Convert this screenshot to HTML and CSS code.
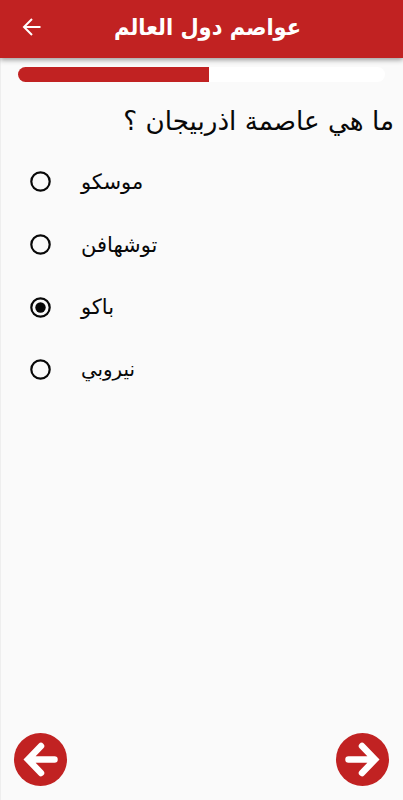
FILE: index.html
```html
<!DOCTYPE html>
<html lang="ar"><head><meta charset="utf-8"><title>عواصم دول العالم</title><link rel="stylesheet" href="styles.css"></head>
<body>
<header class="bar">
<svg class="back" viewBox="0 0 20 20"><path d="M18.5 10H2M10 2 2 10l8 8"/></svg>
<h1 class="title" dir="rtl">عواصم دول العالم</h1>
</header>
<main class="quiz">
<div class="progress"><div class="progress-fill"></div></div>
<h2 class="question" dir="rtl">ما هي عاصمة اذربيجان ؟</h2>
<div class="options">
<div class="option"><svg class="radio" viewBox="0 0 21 21"><circle class="ring" cx="10.5" cy="10.5" r="9.2"/></svg><span class="label">موسكو</span></div>
<div class="option"><svg class="radio" viewBox="0 0 21 21"><circle class="ring" cx="10.5" cy="10.5" r="9.2"/></svg><span class="label">توشهافن</span></div>
<div class="option"><svg class="radio" viewBox="0 0 21 21"><circle class="ring" cx="10.5" cy="10.5" r="9.2"/><circle cx="10.5" cy="10.5" r="5.2"/></svg><span class="label">باكو</span></div>
<div class="option"><svg class="radio" viewBox="0 0 21 21"><circle class="ring" cx="10.5" cy="10.5" r="9.2"/></svg><span class="label narrow">نيروبي</span></div>
</div>
</main>
<footer class="nav">
<button class="round" aria-label="السابق"><svg viewBox="0 0 53 53"><path d="M40.5 26.5H17M27 13 14 26.5 27 40"/></svg></button>
<button class="round" aria-label="التالي"><svg viewBox="0 0 53 53"><path d="M12.5 26.5H36M26 13l13 13.5L26 40"/></svg></button>
</footer>
</body></html>
```
FILE: styles.css
```css
*{box-sizing:border-box}
body{margin:0;height:800px;display:flex;flex-direction:column;background:#fafafa;font-family:"DejaVu Sans",sans-serif;color:#080808;overflow:hidden;box-shadow:inset 1px 0 #eee}
.bar{height:58px;flex:none;background:#c12222;box-shadow:0 2px 5px rgba(0,0,0,.38);display:flex;align-items:center;padding:0 0 5px 22px;color:#fff}
.back{width:20px;height:20px;fill:none;stroke:#fff;stroke-width:2}
.title{margin:0 0 0 72px;font-size:23px;line-height:54px;white-space:nowrap;transform:scaleX(.912);transform-origin:left}
.quiz{flex:1}
.progress{margin:9px 18px 0;height:15px;border-radius:8px;background:#fff;overflow:hidden}
.progress-fill{width:191px;height:15px;background:#c12222}
.question{margin:15px 9px 0;font-size:26.2px;font-weight:400;line-height:48px;white-space:nowrap}
.options{margin-top:5.5px}
.option{height:62.7px;display:flex;align-items:center;padding-left:30px}
.radio{width:21px;height:21px;flex:none;fill:#080808}
.ring{fill:none;stroke:#080808;stroke-width:2.2}
.label{margin-left:30px;font-size:21px;line-height:32px}
.narrow{font-size:19.8px}
.nav{display:flex;justify-content:space-between;padding:0 14px 14px}
.round{width:53px;height:53px;padding:0;border:0;border-radius:50%;background:#c12222}
.round svg{width:53px;height:53px;display:block;fill:none;stroke:#fff;stroke-width:6.5;stroke-linecap:round}
```
